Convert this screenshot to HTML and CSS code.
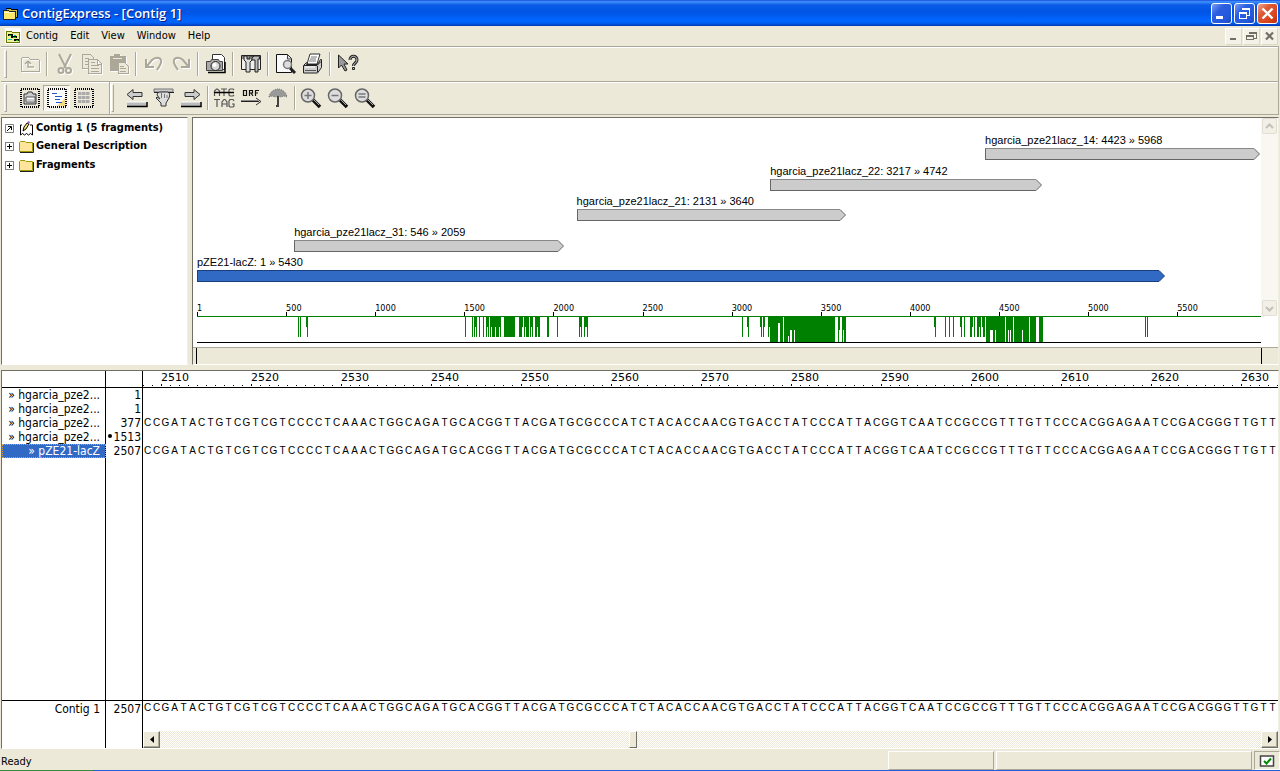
FILE: index.html
```html
<!DOCTYPE html>
<html lang="en">
<head>
<meta charset="utf-8">
<title>ContigExpress - [Contig 1]</title>
<link rel="stylesheet" href="styles.css">
</head>
<body>
<header class="titlebar">
  <svg class="app-icon" width="16" height="16" viewBox="0 0 16 16" shape-rendering="crispEdges"><path d="M4 4V3h4l1 1h6v8h-2" fill="#c9c04a" stroke="#000"/><path d="M1 5h5l1 1h6v8H1z" fill="#ffe96b" stroke="#222"/><path d="M2 7h10" stroke="#fffbd0"/></svg>
  <h1 class="title">ContigExpress - [Contig 1]</h1>
  <button class="win-btn" aria-label="Minimize"><svg width="19" height="19" viewBox="0 0 19 19"><path d="M4 12h7v3H4z" fill="#fff"/></svg></button>
  <button class="win-btn" aria-label="Restore"><svg width="19" height="19" viewBox="0 0 19 19" fill="none" stroke="#fff" shape-rendering="crispEdges"><path d="M7 6V4h7v7h-2M7 5h7"/><path d="M4.500 8.500h7v6h-7zM4 9.500h8"/></svg></button>
  <button class="win-btn close" aria-label="Close"><svg width="19" height="19" viewBox="0 0 19 19"><path d="M4.500 4.500l10 10M14.500 4.500l-10 10" stroke="#fff" stroke-width="2.400"/></svg></button>
</header>

<nav class="menubar">
  <svg class="doc-icon" width="16" height="16" viewBox="0 0 16 16" shape-rendering="crispEdges"><path d="M0 0h16v16H0z" fill="#fff"/><path d="M1 4l1-1h4l1 1h7v10H1z" fill="#eef29a" stroke="#6b7a00"/><path d="M3 7h5M6 9h6M9 12h5" stroke="#000" stroke-width="2"/><path d="M4 7h2M8 9h3M11 12h2" stroke="#0c0"/><path d="M9 7h2M3 11h4" stroke="#0bb"/></svg>
  <button class="menu">Contig</button>
  <button class="menu">Edit</button>
  <button class="menu">View</button>
  <button class="menu">Window</button>
  <button class="menu">Help</button>
  <span class="spacer"></span>
  <button class="mdi-btn" aria-label="Minimize document"><svg width="15" height="15" viewBox="0 0 15 15"><path d="M4 9h6v2H4z" fill="#716f64"/></svg></button>
  <button class="mdi-btn" aria-label="Restore document"><svg width="15" height="15" viewBox="0 0 15 15" fill="none" stroke="#716f64" shape-rendering="crispEdges"><path d="M5 5V3h7v6h-2M5 4h7M2.500 6.500h7v4h-7zM2 7.500h8"/></svg></button>
  <button class="mdi-btn" aria-label="Close document"><svg width="15" height="15" viewBox="0 0 15 15"><path d="M4 3.500l7 7M11 3.500l-7 7" stroke="#716f64" stroke-width="2.200"/></svg></button>
</nav>

<div class="toolbar">
  <span class="grip"></span>
  <button class="tool" disabled aria-label="Up one level"><svg width="22" height="22" viewBox="0 0 22 22" fill="none" stroke="#aca899" shape-rendering="crispEdges"><path d="M2 18V6l2-2h5l2 2h8l1 1v11z"/><path d="M9 8v6h6M9 8l-3 3M9 8l3 3" shape-rendering="auto" stroke-width="1.500"/></svg></button>
  <span class="sep"></span>
  <button class="tool" disabled aria-label="Cut"><svg width="22" height="22" viewBox="0 0 22 22" fill="none" stroke="#aca899" stroke-width="2"><path d="M5 1l7 14M17 1l-7 14"/><circle cx="7" cy="17.500" r="2.500"/><circle cx="14.500" cy="17.500" r="2.500"/></svg></button>
  <button class="tool" disabled aria-label="Copy"><svg width="22" height="22" viewBox="0 0 22 22" fill="#ece9d8" stroke="#aca899" shape-rendering="crispEdges"><path d="M1.500 1.500h8l3 3v11h-11z"/><path d="M4 5h4M4 8h3M4 11h3"/><path d="M7.500 6.500h9l4 4v10h-13zM16 7v4h4"/><path d="M10 9h4M10 12h8M10 15h8M10 18h8"/></svg></button>
  <button class="tool" disabled aria-label="Paste"><svg width="22" height="22" viewBox="0 0 22 22" fill="#aca899" stroke="#aca899" shape-rendering="crispEdges"><path d="M2 3h4l1-2h4l1 2h5v14H2z"/><path d="M5 5h9" stroke="#ece9d8"/><path d="M10.500 9.500h6l4 4v7h-10z" fill="#ece9d8"/><path d="M12 13h4M12 15h6M12 18h6"/></svg></button>
  <span class="sep"></span>
  <button class="tool" disabled aria-label="Undo"><svg width="22" height="22" viewBox="0 0 22 22" fill="none" stroke="#aca899" stroke-width="2"><path d="M3 6v8h8M4 13l5-6c3-3 8-3 9 0s-1 6-4 10"/></svg></button>
  <button class="tool" disabled aria-label="Redo"><svg width="22" height="22" viewBox="0 0 22 22" fill="none" stroke="#aca899" stroke-width="2"><path d="M19 6v8h-8M18 13l-5-6c-3-3-8-3-9 0s1 6 4 10"/></svg></button>
  <span class="sep"></span>
  <button class="tool" aria-label="Snapshot"><svg width="22" height="22" viewBox="0 0 22 22"><path d="M7.500 1.500h9l3 3v12h-12z" fill="#fff" stroke="#333"/><path d="M1.500 8.500h4l1-2h7l1 2h3v9h-16z" fill="#aaa" stroke="#444"/><path d="M3 19.500h17V9" fill="none" stroke="#000" stroke-width="1.500"/><circle cx="10.500" cy="13" r="4.500" fill="#d8d8d8" stroke="#222"/><circle cx="9.500" cy="12" r="2" fill="#fff"/></svg></button>
  <span class="sep"></span>
  <button class="tool" aria-label="Display setup"><svg width="22" height="22" viewBox="0 0 22 22"><path d="M1.500 2.500h19v14h-19z" fill="#eee" stroke="#222"/><path d="M2 3h18v3H2z" fill="#888"/><path d="M4 3v4l2 2v10h4V9l2-2V3l-2 0v3H7V3z" fill="#ddd" stroke="#222"/><path d="M12 5l2-2h5l1 3h-2v13h-3V7h-3z" fill="#bbb" stroke="#222"/></svg></button>
  <span class="sep"></span>
  <button class="tool" aria-label="Print preview"><svg width="22" height="22" viewBox="0 0 22 22"><path d="M1.500 1.500h11l4 4v14h-15z" fill="#f8f8f8" stroke="#111"/><path d="M12.500 2v4h4" fill="#ddd" stroke="#444"/><path d="M15 15l5 5" stroke="#222" stroke-width="3"/><circle cx="12.500" cy="11.500" r="4" fill="#ddd" stroke="#777" stroke-width="1.500"/></svg></button>
  <button class="tool" aria-label="Print"><svg width="22" height="22" viewBox="0 0 22 22"><path d="M5 11L8 1h10l-3 10z" fill="#fff" stroke="#333"/><path d="M9 4h6M8 6h6M7 8h7" stroke="#777"/><path d="M1.500 12.500l3-3h1l-1 2h11l3-5h1v8l-4 5.500h-14z" fill="#ccc" stroke="#222"/><path d="M2 12.500h13l4-4M15.500 13v6" fill="none" stroke="#222"/><path d="M3 14h10" stroke="#fff"/><path d="M3 17.500h11" stroke="#555"/></svg></button>
  <span class="sep"></span>
  <button class="tool" aria-label="Context help"><svg width="22" height="22" viewBox="0 0 22 22"><path d="M1.500 2v13l3-3 3.500 6 2-1-3-6h4z" fill="#999" stroke="#222"/><path d="M13 7c0-5 7-5 7 0 0 3-3.500 3-3.500 6" fill="none" stroke="#222" stroke-width="3"/><path d="M13 7c0-5 7-5 7 0 0 3-3.500 3-3.500 6" fill="none" stroke="#ccc"/><path d="M15.500 14.500h2v2h-2z" fill="#ccc" stroke="#222"/></svg></button>
</div>

<div class="toolbar second">
  <span class="grip"></span>
  <button class="tool" aria-label="Text pane"><svg width="20" height="20" viewBox="0 0 20 20"><path class="marquee" d="M1 1h18v18H1z"/><path d="M4 6h3l1-2h4l1 2h3v10H4z" fill="#ccc" stroke="#333"/><path d="M6 9h9v5H6z" fill="#fff" stroke="#555"/><path d="M6 12h8" stroke="#999"/></svg></button>
  <button class="tool pressed" aria-label="Graphics pane"><svg width="20" height="20" viewBox="0 0 20 20"><path d="M2 2h16v16H2z" fill="#fff"/><path d="M10 18l8-8v8z" fill="#f8d880"/><path class="marquee" d="M1 1h18v18H1z"/><path d="M5 5.500h5M8 8.500h7M8 11.500h5M9 14.500h6" stroke="#2456d0"/></svg></button>
  <button class="tool" aria-label="Sequence pane"><svg width="20" height="20" viewBox="0 0 20 20"><path class="marquee" d="M1 1h18v18H1z"/><path d="M4 5.500h12M4 9.500h12M4 13.500h12" stroke="#aaa" stroke-width="3" stroke-dasharray="3.500 .5"/></svg></button>
  <span class="band-gap"></span>
  <span class="grip"></span>
  <button class="tool" aria-label="Previous"><svg width="22" height="22" viewBox="0 0 22 22"><path d="M1 7.500l6-5v3h9v4H7v3z" fill="#ccc" stroke="#333"/><path d="M1 15h19v4H1z" fill="#bbb"/><path d="M1 19.500h20V15" fill="none" stroke="#000" stroke-width="1.500"/><path d="M1 15h19" stroke="#fff"/></svg></button>
  <button class="tool" aria-label="Pan"><svg width="22" height="22" viewBox="0 0 22 22"><path d="M1 2h19v3H1z" fill="#ccc" stroke="#777"/><path d="M1 5.500h5M15 5.500h6" stroke="#222"/><path d="M4 8c0-2 2-3 4-3h7c2 1 2 3 1 6l-3 5v3H8v-3l-5-5 1-1 3 2z" fill="#ddd" stroke="#333"/><path d="M8.500 6v5M11.500 7v4M14 8v3" stroke="#777"/></svg></button>
  <button class="tool" aria-label="Next"><svg width="22" height="22" viewBox="0 0 22 22"><path d="M20 7.500l-6-5v3H5v4h9v3z" fill="#ccc" stroke="#333"/><path d="M1 15h19v4H1z" fill="#bbb"/><path d="M1 19.500h20V15" fill="none" stroke="#000" stroke-width="1.500"/><path d="M1 15h19" stroke="#fff"/></svg></button>
  <span class="sep narrow"></span>
  <button class="tool" aria-label="Show both strands"><svg width="22" height="22" viewBox="0 0 22 22" fill="none" stroke="#555" stroke-width="1.200"><path d="M1.500 9V4l2-2h1l2 2v5M8 2h6M11 2v7M21 3l-1-1h-3l-1 1v5l1 1h3l1-1"/><path d="M1 12.500h6M4 12.500v7.500M9 20v-5l2-2.500h1l2 2.500v5M9 17h5M21 14l-1-1.500h-3l-1 1.500v5l1 1h3l1-1v-2h-2"/><path d="M1 5.500h20" stroke="#000" stroke-width="1.500"/></svg></button>
  <button class="tool" aria-label="Open reading frames"><svg width="22" height="22" viewBox="0 0 22 22" fill="none" stroke="#111"><path d="M3.500 3.500h3v5h-3zM9.500 9V3.500h3v2.500h-3M11 6l2 3M15.500 9V3.500h3.500M15.500 6H18" stroke-width="1.200"/><path d="M1 13.500h17" stroke="#888"/><path d="M1 14.500h18" stroke="#222"/><path d="M16 11l5 3.500-5 3.500" stroke="#333"/></svg></button>
  <button class="tool" aria-label="Protection"><svg width="22" height="22" viewBox="0 0 22 22"><path d="M2 10c1-5 4-7 8-8h2c4 1 7 3 8 8l-3-1-3 1-3-1-3 1-3-1z" fill="#999" stroke="#777" stroke-dasharray="1 1"/><path d="M11 9v11M9 19h3" stroke="#444" stroke-width="2"/></svg></button>
  <span class="sep narrow"></span>
  <button class="tool" aria-label="Zoom in"><svg width="22" height="22" viewBox="0 0 22 22"><path d="M13 13l7 7" stroke="#111" stroke-width="3.500"/><path d="M14 13l5 5" stroke="#aaa"/><circle cx="8" cy="8.500" r="6.500" fill="#ddd" stroke="#666" stroke-width="1.500"/><path d="M4.500 8.500h7M8 5v7" stroke="#777" stroke-width="1.500"/></svg></button>
  <button class="tool" aria-label="Zoom out"><svg width="22" height="22" viewBox="0 0 22 22"><path d="M13 13l7 7" stroke="#111" stroke-width="3.500"/><path d="M14 13l5 5" stroke="#aaa"/><circle cx="8" cy="8.500" r="6.500" fill="#ddd" stroke="#666" stroke-width="1.500"/><path d="M4.500 8.500h7" stroke="#777" stroke-width="1.500"/></svg></button>
  <button class="tool" aria-label="Zoom to fit"><svg width="22" height="22" viewBox="0 0 22 22"><path d="M13 13l7 7" stroke="#111" stroke-width="3.500"/><path d="M14 13l5 5" stroke="#aaa"/><circle cx="8" cy="8.500" r="6.500" fill="#ddd" stroke="#666" stroke-width="1.500"/><path d="M4.500 7h7M4.500 10h7" stroke="#777" stroke-width="1.500"/></svg></button>
</div>

<main class="workspace">
  <section class="upper">
    <ul class="tree">
      <li><svg width="9" height="9" viewBox="0 0 9 9"><path d="M.5.5h8v8h-8z" fill="#fff" stroke="#808080"/><path d="M2 7l4-4M3 2.500h3.500V6" fill="none" stroke="#000"/></svg><svg width="15" height="15" viewBox="0 0 15 15"><path d="M3 4H1.500v10l2-1.500 2 1.500 2-1.500 2 1.500 2-1.500 2 1.500V4H11" fill="#fff" stroke="#000"/><path d="M4 10l1-4 3-4 2 1-3 5z" fill="#ffe96b" stroke="#000"/><path d="M8 2l1-2 2 1-1 2z" fill="#a060a0"/></svg><b>Contig 1 (5 fragments)</b></li>
      <li><svg width="9" height="9" viewBox="0 0 9 9" shape-rendering="crispEdges"><path d="M.5.5h8v8h-8z" fill="#fff" stroke="#808080"/><path d="M2 4.500h5M4.500 2v5" stroke="#000"/></svg><svg width="15" height="13" viewBox="0 0 15 13"><path d="M.5 11.500v-9l1-1H6l1 1h6.500v9z" fill="#ffe49c" stroke="#9a9a00"/><path d="M1 12.500h13.500V3" fill="none" stroke="#222"/></svg><b>General Description</b></li>
      <li><svg width="9" height="9" viewBox="0 0 9 9" shape-rendering="crispEdges"><path d="M.5.5h8v8h-8z" fill="#fff" stroke="#808080"/><path d="M2 4.500h5M4.500 2v5" stroke="#000"/></svg><svg width="15" height="13" viewBox="0 0 15 13"><path d="M.5 11.500v-9l1-1H6l1 1h6.500v9z" fill="#ffe49c" stroke="#9a9a00"/><path d="M1 12.500h13.500V3" fill="none" stroke="#222"/></svg><b>Fragments</b></li>
    </ul>
    <div class="map">
      <div class="map-body">
        <div class="plot">
          <div class="fragments" id="fragments"></div>
          <div class="scale" id="scale"></div>
          <svg class="differences" viewBox="0 0 1064 25" preserveAspectRatio="none" shape-rendering="crispEdges"><path id="marks" fill="#008000"/></svg>
        </div>
        <div class="vscroll">
          <button aria-label="Scroll up"><svg width="9" height="9" viewBox="0 0 9 9"><path d="M1 6l3.500-3.500L8 6" fill="none" stroke="#c4c2b8" stroke-width="2"/></svg></button>
          <button aria-label="Scroll down"><svg width="9" height="9" viewBox="0 0 9 9"><path d="M1 3l3.500 3.500L8 3" fill="none" stroke="#c4c2b8" stroke-width="2"/></svg></button>
        </div>
      </div>
      <div class="range"><span></span></div>
    </div>
  </section>

  <section class="alignment">
    <div class="align-row head"><span class="name"></span><span class="pos"></span><div class="ruler" id="ruler"></div></div>
    <div class="align-row"><span class="name">» hgarcia_pze2...</span><span class="pos">1</span><span class="bases"></span></div>
    <div class="align-row"><span class="name">» hgarcia_pze2...</span><span class="pos">1</span><span class="bases"></span></div>
    <div class="align-row"><span class="name">» hgarcia_pze2...</span><span class="pos">377</span><span class="bases filled"></span></div>
    <div class="align-row"><span class="name">» hgarcia_pze2...</span><span class="pos"><i class="dot"></i>1513</span><span class="bases"></span></div>
    <div class="align-row"><span class="name selected">» pZE21-lacZ</span><span class="pos">2507</span><span class="bases filled"></span></div>
    <div class="align-row rest"><span class="name"></span><span class="pos"></span><span class="bases"></span></div>
    <div class="align-row consensus"><span class="name">Contig 1</span><span class="pos">2507</span>
      <div class="consensus-seq"><span class="bases filled"></span>
        <div class="hscroll"><button aria-label="Scroll left"><svg width="4" height="7" viewBox="0 0 4 7"><path d="M4 0v7L0 3.500z"/></svg></button><div class="track"><span class="thumb"></span></div><button aria-label="Scroll right"><svg width="4" height="7" viewBox="0 0 4 7"><path d="M0 0v7l4-3.500z"/></svg></button></div>
      </div>
    </div>
  </section>
</main>

<footer class="status"><span class="ready">Ready</span><span class="cell small"></span><span class="cell wide"></span><span class="cell check"><svg width="16" height="12" viewBox="0 0 16 12"><path d="M1.500 1h13v10h-13z" fill="#fff" stroke="#444" stroke-width="1.500"/><path d="M5 6l2.500 2.500L12 3.500" fill="none" stroke="#080" stroke-width="2"/></svg></span></footer>
<div class="desktop-edge"></div>
<script src="app.js"></script>
</body>
</html>
```
FILE: styles.css
```css
* { box-sizing: border-box; }
body {
  margin: 0;
  min-height: 100vh;
  display: flex;
  flex-direction: column;
  overflow-x: hidden;
  background: #ece9d8;
  color: #000;
  font: 11px/14px "DejaVu Sans Condensed", "DejaVu Sans", sans-serif;
}
button { margin: 0; padding: 0; border: 0; background: none; font: inherit; color: inherit; }
svg { display: block; flex: none; }

.titlebar {
  display: flex;
  align-items: center;
  gap: 2px;
  height: 26px;
  padding: 0 2px;
  background: linear-gradient(#0831d9 0, #3c8cf8 1px, #3c8cf8 2px, #0a5be8 5px, #0054e3 12px, #0062fb 19px, #0066ff 22px, #0048d0 25px, #0030a8 26px);
}
.title {
  flex: 1;
  margin: 0;
  padding-left: 2px;
  color: #fff;
  font: 600 13px/18px "Open Sans", sans-serif;
  text-shadow: 1px 1px #0a1883;
}
.win-btn {
  width: 21px;
  height: 21px;
  border: 1px solid #fff;
  border-radius: 3px;
  background: linear-gradient(135deg, #7a9df4, #2c5ee0 35%, #2358dc 75%, #1b47c0);
}
.close { background: linear-gradient(135deg, #f0a48c, #dc5a35 35%, #d8421c 75%, #b03010); }

.menubar { display: flex; align-items: center; height: 20px; padding: 0 2px 0 5px; gap: 1px; }
.menu { padding: 0 4px; margin-right: 3px; }
.spacer { flex: 1; }
.mdi-btn { width: 17px; height: 17px; border: 1px solid #fff; border-right-color: #dcd8c6; border-bottom-color: #dcd8c6; background: #f4f2e8; }

.toolbar {
  display: flex;
  align-items: center;
  height: 36px;
  margin: 0 1px;
  padding-left: 3px;
  border: solid #aca899;
  border-width: 1px 1px 1px 0;
  box-shadow: inset 0 1px #fff;
}
.second { height: 33px; border-top: 0; }
.grip { width: 3px; height: 28px; margin-right: 9px; border: 1px solid #aca899; border-left-color: #fff; border-top-color: #fff; }
.tool { display: flex; align-items: center; justify-content: center; width: 27px; height: 26px; }
.tool[disabled] svg { filter: drop-shadow(1px 1px 0 #fff); }
.pressed { border: 1px solid #aca899; border-right-color: #fff; border-bottom-color: #fff; background: #f6f4ec; }
.marquee { fill: none; stroke: #000; stroke-width: 2; stroke-dasharray: 1 1; }
.sep { width: 8px; height: 24px; background: linear-gradient(90deg, transparent 3px, #aca899 3px, #aca899 4px, #fff 4px, #fff 5px, transparent 5px); }
.narrow { width: 6px; }
.band-gap { align-self: stretch; width: 14px; border-right: 1px solid #fff; box-shadow: inset -1px 0 #aca899; }

.workspace { flex: 1; display: flex; flex-direction: column; padding: 2px 1px 0; }
.upper { display: flex; gap: 4px; height: 248px; }
.tree, .map, .alignment { border: 1px solid #716f64; border-right-color: #f1efe2; border-bottom-color: #fff; background: #fff; }
.tree { width: 187px; margin: 0; padding: 1px 3px; list-style: none; }
.tree li { display: flex; align-items: center; gap: 5px; height: 18px; }
.tree li:last-child { height: 20px; }
.tree b { margin-left: -3px; }

.map { flex: 1; display: flex; flex-direction: column; }
.map-body { flex: 1; display: flex; }
.plot { flex: 1; display: flex; flex-direction: column; padding: 15px 0 4px 4px; font: 11px/14px "Liberation Sans", Arial, sans-serif; }
.fragment { height: 31px; white-space: nowrap; }
.fragment:nth-child(even) { height: 30px; }
.arrow { display: flex; margin-top: 1px; }
.shaft { flex: 1; height: 12px; border: solid #666; border-width: 1px 0 1px 1px; border-top-color: #888; background: #ccc; }
.arrow path { fill: #ccc; stroke: #666; }
.reference .shaft { background: #316ac5; border-color: #1b3f7c; }
.reference path { fill: #316ac5; stroke: #1b3f7c; }
.scale { display: flex; margin-top: 15px; height: 15px; font: 9px/14px "DejaVu Sans Condensed", sans-serif; overflow: hidden; }
.scale span { flex: none; background: linear-gradient(#000, #000) 0 11px / 1px 4px no-repeat; }
.differences { width: 100%; height: 27px; border-top: 1px solid #008000; border-bottom: 1px solid #000; }
.vscroll { display: flex; flex-direction: column; justify-content: space-between; width: 17px; height: 198px; background: #f8f7f1; }
.vscroll button { display: flex; align-items: center; justify-content: center; height: 16px; margin: 0 1px; border: 1px solid #e2dfd2; border-radius: 2px; background: #f1efe6; }
.range { display: flex; height: 17px; padding: 0 16px 0 3px; border-top: 1px solid #aca899; background: #ece9d8; }
.range span { flex: 1; border: solid #000; border-width: 0 1px; }

.alignment { flex: 1; display: flex; flex-direction: column; margin-top: 5px; font-size: 12px; overflow: hidden; }
.align-row { display: flex; height: 14px; }
.name { flex: none; width: 104px; padding-right: 5px; border-right: 1px solid #000; text-align: right; white-space: nowrap; }
.selected { background: #316ac5; color: #fff; outline: 1px dotted #e0a030; outline-offset: -1px; }
.pos { flex: none; width: 37px; border-right: 1px solid #000; padding-right: 1px; text-align: right; }
.dot { display: inline-block; width: 4px; height: 4px; margin: 0 2px 3px 0; border-radius: 2px; background: #000; }
.head { height: 17px; border-bottom: 1px solid #000; }
.ruler {
  flex: 1;
  display: flex;
  padding-left: 18px;
  overflow: hidden;
  font: 11px/14px "DejaVu Sans", sans-serif;
  background: repeating-linear-gradient(90deg, #000 0, #000 1px, transparent 1px, transparent 9px) 0 14px / 100% 1px no-repeat;
}
.ruler span { flex: none; width: 90px; background: linear-gradient(#000, #000) 0 13px / 1px 2px no-repeat; }
.bases { flex: 1; overflow: hidden; white-space: nowrap; font: 10px/14px "Liberation Sans", Arial, sans-serif; }
.bases span { display: inline-block; width: 9px; text-align: center; }
.rest { flex: 1; }
.consensus { height: 48px; border-top: 1px solid #000; line-height: 16px; }
.consensus-seq { flex: 1; min-width: 0; display: flex; flex-direction: column; }
.hscroll { display: flex; height: 17px; }
.hscroll button { display: flex; align-items: center; justify-content: center; width: 17px; border: 1px solid #fff; border-right-color: #716f64; border-bottom-color: #716f64; background: #ece9d8; box-shadow: inset -1px -1px #aca899; }
.track { flex: 1; display: flex; padding-left: 41.3%; background: repeating-conic-gradient(#fff 0 25%, #ece9d8 0 50%) 0 0 / 2px 2px; }
.thumb { width: 8px; border: 1px solid #fff; border-right-color: #716f64; border-bottom-color: #716f64; background: #ece9d8; }

.status { display: flex; gap: 2px; height: 21px; padding: 2px 0 0 1px; }
.ready { flex: 1; line-height: 21px; }
.cell { border: 1px solid #fff; border-right-color: #aca899; border-bottom-color: #aca899; }
.small { width: 106px; }
.wide { width: 256px; }
.check { display: flex; align-items: center; justify-content: center; width: 26px; border-color: #aca899 #fff #fff #aca899; }
.desktop-edge { height: 1px; background: linear-gradient(90deg, #3c8c3c 93px, #245edb 93px); }
```
FILE: app.js
```js
const CONTIG_LENGTH = 5970;

const fragments = [
  ["hgarcia_pze21lacz_14", 4423, 5968],
  ["hgarcia_pze21lacz_22", 3217, 4742],
  ["hgarcia_pze21lacz_21", 2131, 3640],
  ["hgarcia_pze21lacz_31", 546, 2059],
  ["pZE21-lacZ", 1, 5430],
];
document.getElementById("fragments").innerHTML = fragments.map(([name, from, to], i) => {
  const left = (from - 1) / CONTIG_LENGTH * 100;
  const width = (to - from) / CONTIG_LENGTH * 100;
  return `<div class="fragment${i === 4 ? " reference" : ""}" style="margin-left:${left}%;width:${width}%">${name}: ${from} » ${to}` +
    `<div class="arrow"><span class="shaft"></span><svg width="6" height="12" viewBox="0 0 6 12"><path d="M0 .5L5.500 6 0 11.500"/></svg></div></div>`;
}).join("");

let scale = "";
for (let p = 0; p < 6000; p += 500) {
  scale += `<span style="width:${500 / CONTIG_LENGTH * 100}%">${p || 1}</span>`;
}
document.getElementById("scale").innerHTML = scale;

// Each entry: left, width, top, bottom
const marks = [];
const add = (top, bottom, list) => list.forEach(([x, w]) => marks.push([x, w, top, bottom]));
add(0, 20, [[101,1],[103,1],[110,1],[268,1],[275,1],[277,1],[279,1],[282,1],[286,1],[289,1],[291,1],[293,1],[295,3],[299,3],[303,1],
  [307,11],[322,3],[327,1],[329,3],[333,1],[335,1],[338,2],[341,2],[350,2],[360,1],[382,1],[384,1],[387,1],[390,1],
  [545,1],[551,1],[564,1],[566,1],[571,1],[738,1],[748,1],[752,1],[756,1],[764,1],[767,1],[773,2],[777,1],[780,2],[783,1],[786,2],
  [948,1],[950,1]]);
add(0, 10, [[109,1],[278,1],[290,2],[294,10],[325,1],[328,1],[334,1],[340,1],[383,1],[388,2],[550,1],[563,1],[567,1],[572,1],[737,1],[763,1],[775,1],[782,1],[785,1]]);
add(0, 25, [[573,8],[583,3],[587,4],[592,1],[595,2],[598,40],[641,1],[645,1],[647,2],[789,4],[796,2],[799,9],[809,2],[812,1],[814,2],[817,8],[826,6],[833,6],[842,4]]);
add(0, 13, [[593,2],[597,1],[642,1],[646,1],[793,3],[798,1],[811,1],[813,1],[825,1]]);
add(0, 6, [[581,2]]);
add(0, 19, [[591,1]]);
document.getElementById("marks").setAttribute("d",
  marks.map(([x, w, t, b]) => `M${x} ${t}h${w}v${b - t}h${-w}z`).join(""));

let ruler = "";
for (let p = 2510; p <= 2630; p += 10) ruler += `<span>${p}</span>`;
document.getElementById("ruler").innerHTML = ruler;

const sequence = "CCGATACTGTCGTCGTCCCCTCAAACTGGCAGATGCACGGTTACGATGCGCCCATCTACACCAACGTGACCTATCCCATTACGGTCAATCCGCCGTTTGTTCCCACGGAGAATCCGACGGGTTGTT";
document.querySelectorAll(".filled").forEach(row => {
  row.innerHTML = [...sequence].map(base => `<span>${base}</span>`).join("");
});
```
